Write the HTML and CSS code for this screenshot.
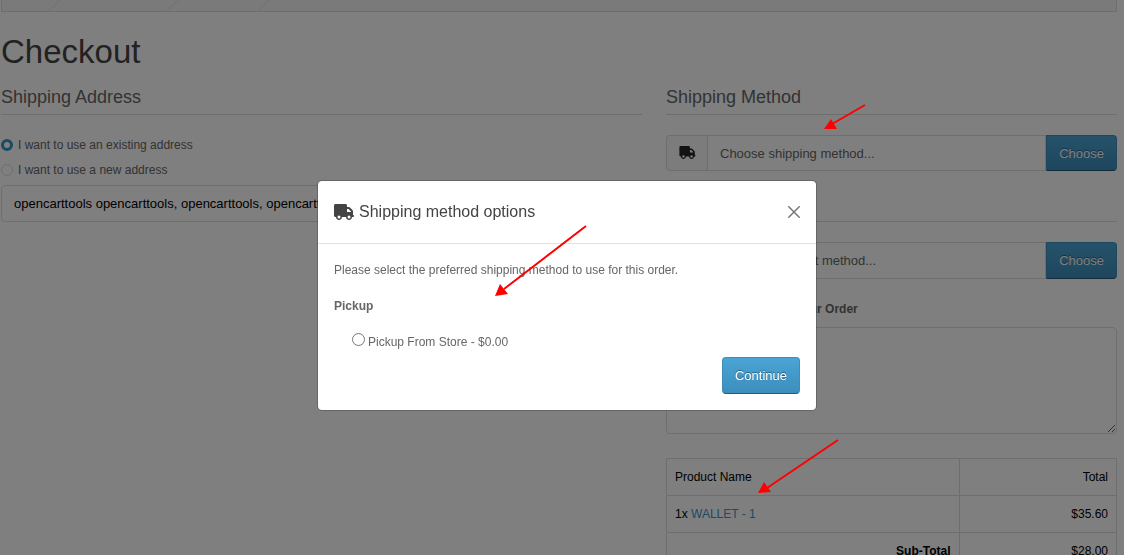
FILE: index.html
```html
<!DOCTYPE html>
<html lang="en">
<head>
<meta charset="utf-8">
<title>Checkout</title>
<link rel="stylesheet" href="styles.css">
</head>
<body>
<svg class="sprite" aria-hidden="true">
  <symbol id="truck" viewBox="0 0 640 512">
    <path d="M48 0C21.500 0 0 21.500 0 48V368c0 26.500 21.500 48 48 48H64c0 53 43 96 96 96s96-43 96-96H384c0 53 43 96 96 96s96-43 96-96h32c17.700 0 32-14.300 32-32s-14.300-32-32-32V237.300c0-17-6.700-33.300-18.700-45.300L512 114.700c-12-12-28.300-18.700-45.300-18.700H416V48c0-26.500-21.500-48-48-48H48zM416 160h50.700L544 237.300V256H416V160zM112 416a48 48 0 1 1 96 0a48 48 0 1 1-96 0zm368-48a48 48 0 1 1 0 96a48 48 0 1 1 0-96z"/>
  </symbol>
</svg>

<nav class="breadcrumb" aria-label="Breadcrumb">
  <span class="crumb crumb-home"></span>
  <span class="crumb crumb-cart"></span>
  <span class="crumb crumb-checkout"></span>
</nav>

<main class="page">
  <h1 class="title">Checkout</h1>
  <div class="columns">
    <section class="column-address">
      <h2 class="legend">Shipping Address</h2>
      <div class="address-options">
        <label class="check"><input class="radio" type="radio" name="address" checked>I want to use an existing address</label>
        <label class="check"><input class="radio" type="radio" name="address">I want to use a new address</label>
      </div>
      <select class="select" aria-label="Existing address">
        <option>opencarttools opencarttools, opencarttools, opencarttools</option>
      </select>
    </section>

    <section class="column-order">
      <h2 class="legend">Shipping Method</h2>
      <div class="input-group">
        <span class="addon"><svg class="icon-small" aria-hidden="true"><use href="#truck"/></svg></span>
        <input class="field" type="text" value="Choose shipping method..." aria-label="Shipping method" readonly>
        <button class="btn btn-joined" type="button">Choose</button>
      </div>
      <h2 class="legend">Payment Method</h2>
      <div class="input-group input-group-payment">
        <span class="addon"></span>
        <input class="field" type="text" value="Choose payment method..." aria-label="Payment method" readonly>
        <button class="btn btn-joined" type="button">Choose</button>
      </div>
      <label class="comment-label" for="comment">Add Comments About Your Order</label>
      <textarea class="comment" id="comment"></textarea>
      <table class="totals">
        <thead>
          <tr><th class="name">Product Name</th><th class="amount">Total</th></tr>
        </thead>
        <tbody>
          <tr><td class="name">1x <a class="link" href="#">WALLET - 1</a></td><td class="amount">$35.60</td></tr>
          <tr><td class="sum">Sub-Total</td><td class="amount">$28.00</td></tr>
        </tbody>
      </table>
    </section>
  </div>
</main>

<div class="backdrop">
  <div class="modal" role="dialog" aria-modal="true" aria-labelledby="modal-title">
    <header class="modal-header">
      <h2 class="modal-title" id="modal-title"><svg class="icon-large" aria-hidden="true"><use href="#truck"/></svg>Shipping method options</h2>
      <button class="close" type="button" aria-label="Close"><svg class="icon-close" viewBox="0 0 12 12" aria-hidden="true"><path d="M.3 .3 11.700 11.700M11.700 .3 .3 11.700"/></svg></button>
    </header>
    <form class="modal-body">
      <p class="text">Please select the preferred shipping method to use for this order.</p>
      <p class="text text-strong">Pickup</p>
      <label class="quote"><input class="quote-radio" type="radio" name="quote">Pickup From Store - $0.00</label>
      <button class="btn btn-continue" type="button">Continue</button>
    </form>
  </div>
</div>

<svg class="arrows" width="1124" height="555" aria-hidden="true">
  <path class="shaft" d="M865 105 832 124M586 226 504 289M838 440 767 488"/>
  <path class="head" d="M824 129 831 119 837 129zM495 296 500 284 508 294zM758 493 764 482 771 492z"/>
</svg>
</body>
</html>
```
FILE: styles.css
```css
* {
  box-sizing: border-box;
}

html {
  overflow: hidden;
}

body {
  margin: 0;
  background: #fff;
  color: #666;
  font: 12px/18px "Liberation Sans", Arial, sans-serif;
}

h1, h2, p {
  margin: 0;
  font-weight: 400;
}

input, button, select, textarea {
  margin: 0;
  font-family: inherit;
}

.sprite {
  position: absolute;
  width: 0;
  height: 0;
}

.breadcrumb {
  display: flex;
  height: 12px;
  margin: 0 7px 0 1px;
  overflow: hidden;
  border: 1px solid #ddd;
  border-top: 0;
  background: #f5f5f5;
}

.crumb {
  border-right: 1px solid #ddd;
  transform: skewX(-45deg);
}

.crumb-home {
  width: 53px;
}

.crumb-cart {
  width: 118px;
}

.crumb-checkout {
  width: 91px;
}

.page {
  padding: 20px 7px 0 1px;
}

.title {
  margin-bottom: 14px;
  color: #444;
  font-size: 33px;
  line-height: 40px;
}

.columns {
  display: grid;
  grid-template-columns: 641fr 451fr;
  gap: 24px;
}

.legend {
  margin-bottom: 20px;
  padding-bottom: 6px;
  border-bottom: 1px solid #ddd;
  font-size: 18px;
  line-height: 22px;
}

.address-options {
  display: grid;
  gap: 7px;
  padding: 1px 0 6px;
}

.check {
  display: flex;
  align-items: center;
  gap: 5px;
}

.radio {
  appearance: none;
  width: 12px;
  height: 12px;
  border: 1px solid #dedede;
  border-radius: 50%;
  background: #fff;
}

.radio:checked {
  border: 3px solid #3496c8;
}

.select {
  display: block;
  appearance: none;
  width: 100%;
  height: 37px;
  padding: 0 12px;
  border: 1px solid #ddd;
  border-radius: 4px;
  background: #fff;
  color: #000;
  font-size: 13px;
}

.input-group {
  display: flex;
  height: 36px;
  margin-bottom: 22px;
}

.input-group-payment {
  height: 37px;
  margin-bottom: 21px;
}

.addon {
  display: flex;
  flex: 0 0 41px;
  align-items: center;
  justify-content: center;
  padding-bottom: 2px;
  border: 1px solid #ddd;
  border-right: 0;
  border-radius: 4px 0 0 4px;
  background: #f9f9f9;
}

.icon-small {
  width: 17px;
  height: 13px;
  fill: #212529;
}

.field {
  flex: 1;
  min-width: 0;
  padding: 0 12px;
  border: 1px solid #ddd;
  border-radius: 0;
  background: #fff;
  color: #666;
  font-size: 13px;
}

.btn {
  height: 37px;
  padding: 0 12px;
  border: 1px solid #3c8dbb;
  border-bottom-color: #245b7a;
  border-radius: 4px;
  background: linear-gradient(#4aa4d5, #3d8ebc);
  color: #fff;
  font-size: 13px;
  text-shadow: 0 -1px 0 rgba(0, 0, 0, .4);
}

.btn-joined {
  height: auto;
  border-radius: 0 4px 4px 0;
}

.comment-label {
  display: block;
  margin-bottom: 9px;
  font-weight: 700;
}

.comment {
  display: block;
  width: 100%;
  height: 107px;
  margin-bottom: 24px;
  border: 1px solid #ddd;
  border-radius: 4px;
  background: #fff;
}

.totals {
  width: 100%;
  border-collapse: collapse;
  color: #000;
}

.totals th,
.totals td {
  height: 37px;
  padding: 0 8px;
  border: 1px solid #ddd;
  font-weight: 400;
}

.totals .name {
  width: 65%;
  text-align: left;
}

.totals .amount {
  text-align: right;
}

.totals .sum {
  font-weight: 700;
  text-align: right;
}

.link {
  color: #3896c8;
  text-decoration: none;
}

.backdrop {
  position: fixed;
  inset: 0;
  display: flex;
  align-items: flex-start;
  justify-content: center;
  padding: 180px 0 0 10px;
  background: rgba(0, 0, 0, .5);
}

.modal {
  flex: 0 1 500px;
  border: 1px solid rgba(0, 0, 0, .2);
  border-radius: 5px;
  background: #fff;
  background-clip: padding-box;
}

.modal-header {
  display: flex;
  align-items: center;
  justify-content: space-between;
  height: 63px;
  padding: 0 16px;
  border-bottom: 1px solid #dee2e6;
}

.modal-title {
  display: flex;
  align-items: center;
  gap: 5px;
  color: #444;
  font-size: 16px;
  line-height: 20px;
}

.icon-large {
  width: 20px;
  height: 16px;
  fill: #444;
}

.close {
  display: flex;
  padding: 0;
  border: 0;
  background: none;
}

.icon-close {
  width: 12px;
  height: 12px;
  fill: none;
  stroke: #777;
  stroke-width: 1.5;
}

.modal-body {
  display: flex;
  flex-direction: column;
  padding: 16px;
}

.text {
  margin-bottom: 16px;
  line-height: 20px;
}

.text-strong {
  font-weight: 700;
}

.quote {
  display: flex;
  align-items: flex-start;
  gap: 3px;
  margin-bottom: 5px;
  padding-left: 18px;
  line-height: 20px;
}

.quote-radio {
  width: 13px;
  height: 13px;
  margin-top: 1px;
}

.btn-continue {
  align-self: flex-end;
}

.arrows {
  position: absolute;
  top: 0;
  left: 0;
  pointer-events: none;
}

.shaft {
  fill: none;
  stroke: #f00;
  stroke-width: 2;
}

.head {
  fill: #f00;
}
```
